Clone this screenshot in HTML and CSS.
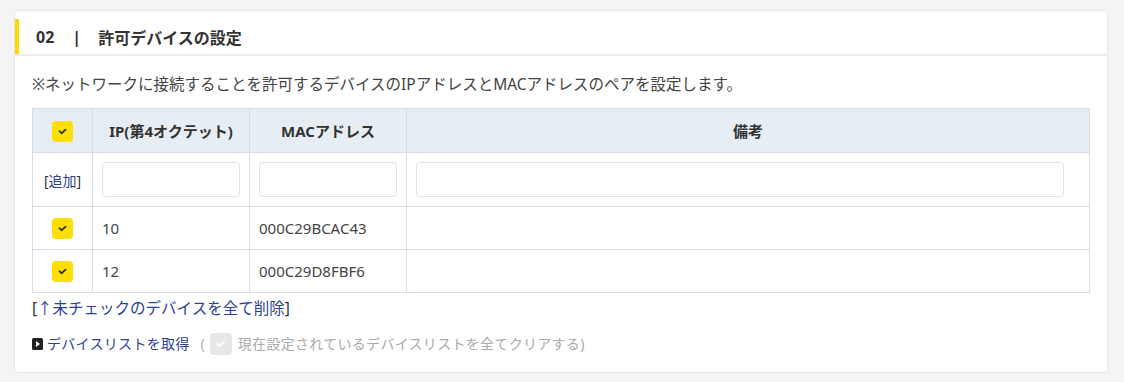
FILE: index.html
```html
<!DOCTYPE html>
<html lang="ja">
<head>
  <meta charset="UTF-8">
  <title>許可デバイスの設定</title>
  <link rel="stylesheet" href="styles.css">
</head>
<body>

<div class="panel">
  <!-- Section heading -->
  <div class="panel-head">
    <h2 class="panel-title"><span class="num">02</span><span class="sep">|</span>許可デバイスの設定</h2>
  </div>

  <div class="panel-body">
    <p class="note">※ネットワークに接続することを許可するデバイスのIPアドレスとMACアドレスのペアを設定します。</p>

    <table class="device-table">
      <thead>
        <tr>
          <th class="col-check"><span class="check on"><svg viewBox="0 0 10 8"><path d="M1.5 3.6 L4 6 L8.5 1.8" /></svg></span></th>
          <th class="col-ip">IP(第4オクテット)</th>
          <th class="col-mac">MACアドレス</th>
          <th class="col-memo">備考</th>
        </tr>
      </thead>
      <tbody>
        <tr class="add-row">
          <td class="col-check"><a href="#" class="link"><span class="br">[</span>追加<span class="br">]</span></a></td>
          <td><input type="text" class="field"></td>
          <td><input type="text" class="field"></td>
          <td><input type="text" class="field wide"></td>
        </tr>
        <tr>
          <td class="col-check"><span class="check on"><svg viewBox="0 0 10 8"><path d="M1.5 3.6 L4 6 L8.5 1.8" /></svg></span></td>
          <td>10</td>
          <td>000C29BCAC43</td>
          <td></td>
        </tr>
        <tr>
          <td class="col-check"><span class="check on"><svg viewBox="0 0 10 8"><path d="M1.5 3.6 L4 6 L8.5 1.8" /></svg></span></td>
          <td>12</td>
          <td>000C29D8FBF6</td>
          <td></td>
        </tr>
      </tbody>
    </table>

    <div class="remove-line">
      <a href="#" class="link big"><span class="br">[</span>↑未チェックのデバイスを全て削除<span class="br">]</span></a>
    </div>

    <div class="fetch-line">
      <a href="#" class="link fetch">
        <svg class="play" viewBox="0 0 11 12"><rect width="11" height="12" rx="1.5" fill="#222" /><path d="M4 3 L8 6 L4 9 Z" fill="#fff" /></svg>デバイスリストを取得</a>
      <span class="paren">(</span>
      <span class="check off"><svg viewBox="0 0 10 8"><path d="M1.5 3.6 L4 6 L8.5 1.8" /></svg></span>
      <span class="muted">現在設定されているデバイスリストを全てクリアする)</span>
    </div>
  </div>
</div>

</body>
</html>
```

FILE: styles.css
```css
/* Reset */
* {
  margin: 0;
  padding: 0;
  box-sizing: border-box;
}

body {
  font-family: "Noto Sans", "Noto Sans CJK JP", sans-serif;
  background-color: #f4f4f4;
  color: #333;
  padding: 10px 16px 10px 14px;
}

/* Card */
.panel {
  background-color: #fff;
  border: 1px solid #e6e6e6;
  border-radius: 4px;
  padding-top: 8px;
  height: 363px;
}

.panel-head {
  border-bottom: 2px solid #ececec;
}

.panel-title {
  border-left: 4px solid #ffd800;
  height: 35px;
  display: flex;
  align-items: center;
  padding-left: 17px;
  font-size: 16px;
  font-weight: bold;
  color: #333;
}

.panel-title .sep {
  margin: 0 17px 0 18px;
}

.panel-body {
  padding: 17px 17px 0 17px;
}

.note {
  font-size: 15.5px;
  color: #444;
  line-height: 22px;
  margin-bottom: 13px;
}

/* Device table */
.device-table {
  width: 1058px;
  border-collapse: collapse;
  border: 1px solid #d5dee8;
  font-size: 15px;
  color: #444;
}

.device-table th,
.device-table td {
  border: 1px solid #d5dee8;
  text-align: left;
  padding: 0 9px;
}

.device-table th {
  background-color: #e7eef3;
  height: 44px;
  text-align: center;
  font-size: 15px;
  font-weight: bold;
  color: #333;
}

.device-table td {
  height: 43px;
}

.device-table .add-row td {
  height: 54px;
}

.device-table .col-check {
  width: 60px;
  padding: 0;
  text-align: center;
}

.device-table .col-ip {
  width: 157px;
}

.device-table .col-mac {
  width: 156px;
}

.field {
  display: block;
  width: 138px;
  height: 35px;
  border: 1px solid #e3e3e3;
  border-radius: 4px;
  background-color: #fff;
}

.field.wide {
  width: 648px;
}

/* Checkboxes */
.check {
  display: inline-flex;
  align-items: center;
  justify-content: center;
  width: 21px;
  height: 21px;
  border-radius: 4px;
  vertical-align: middle;
}

.check svg {
  width: 9px;
  height: 7px;
  fill: none;
  stroke-width: 2;
  stroke-linecap: round;
  stroke-linejoin: round;
}

.check.on {
  background-color: #ffdf00;
}

.check.on svg {
  stroke: #333;
}

.check.off {
  background-color: #e7e7e7;
  width: 22px;
  height: 22px;
}

.check.off svg {
  stroke: #fff;
  width: 11px;
  height: 8px;
}

/* Links */
.link {
  color: #2e3f9a;
  text-decoration: none;
  font-size: 14px;
}

.link .br {
  color: #333;
}

.link.big {
  font-size: 15.5px;
}

.remove-line {
  margin-top: 4px;
  line-height: 22px;
}

.fetch-line {
  margin-top: 14px;
  display: flex;
  align-items: center;
  line-height: 22px;
  font-size: 14px;
}

.fetch {
  display: inline-flex;
  align-items: center;
  letter-spacing: 0.3px;
}

.play {
  width: 11px;
  height: 12px;
  margin-right: 4px;
}

.paren {
  color: #aab;
  margin: 0 5px 0 11px;
}

.muted {
  color: #aaa;
  margin-left: 6px;
  letter-spacing: 0.3px;
}
```
